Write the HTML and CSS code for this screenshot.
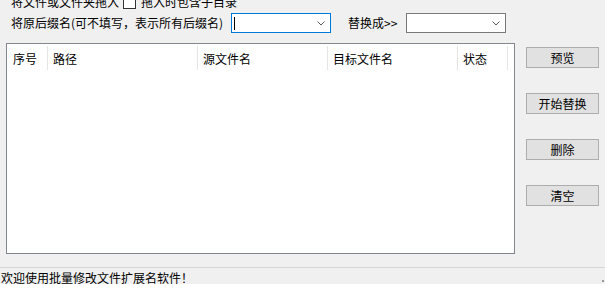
FILE: index.html
```html
<!DOCTYPE html>
<html lang="zh-CN">
<head>
<meta charset="utf-8">
<title>批量修改文件扩展名</title>
<link rel="stylesheet" href="styles.css">
</head>
<body>
<div class="app">
  <div class="row1">
    <span class="lbl">将文件或文件夹拖入</span>
    <span class="check"></span>
    <span class="lbl">拖入时包含子目录</span>
  </div>
  <div class="row2">
    <span class="lbl src-lbl">将原后缀名(可不填写，表示所有后缀名)</span>
    <div class="combo focused">
      <span class="caret"></span>
      <svg class="chev" width="8" height="5" viewBox="0 0 8 5"><path d="M0.5 0.5 L4 4 L7.5 0.5" fill="none" stroke="#5a5a5a" stroke-width="1"/></svg>
    </div>
    <span class="lbl to-lbl">替换成&gt;&gt;</span>
    <div class="combo">
      <span></span>
      <svg class="chev" width="8" height="5" viewBox="0 0 8 5"><path d="M0.5 0.5 L4 4 L7.5 0.5" fill="none" stroke="#5a5a5a" stroke-width="1"/></svg>
    </div>
  </div>
  <div class="main">
    <div class="list">
      <div class="head">
        <div class="hc c1">序号</div>
        <div class="hc c2">路径</div>
        <div class="hc c3">源文件名</div>
        <div class="hc c4">目标文件名</div>
        <div class="hc c5">状态</div>
      </div>
    </div>
    <div class="buttons">
      <button class="btn">预览</button>
      <button class="btn">开始替换</button>
      <button class="btn">删除</button>
      <button class="btn">清空</button>
    </div>
  </div>
  <div class="status">
    <span class="status-text">欢迎使用批量修改文件扩展名软件！</span>
    <span class="grip"></span>
  </div>
</div>
</body>
</html>
```
FILE: styles.css
```css
html, body {
  margin: 0;
  padding: 0;
}
body {
  width: 605px;
  height: 284px;
  overflow: hidden;
  background: #f0f0f0;
  font-family: "Noto Sans CJK SC", "Microsoft YaHei", sans-serif;
  font-size: 12px;
  color: #000;
}
.app {
  display: flex;
  flex-direction: column;
  height: 284px;
}
.row1 {
  display: flex;
  align-items: center;
  height: 16px;
  margin-top: -6px;
  padding-left: 11px;
}
.lbl {
  line-height: 16px;
  white-space: nowrap;
}
.check {
  width: 11px;
  height: 11px;
  border: 1px solid #333;
  background: #fff;
  margin-left: 4px;
  margin-right: 5px;
}
.row2 {
  display: flex;
  align-items: center;
  height: 20px;
  margin-top: 3px;
  padding-left: 11px;
}
.src-lbl {
  width: 220px;
}
.to-lbl {
  margin-left: 17px;
  width: 58px;
}
.combo {
  box-sizing: border-box;
  width: 100px;
  height: 20px;
  border: 1px solid #7a7a7a;
  background: #fff;
  display: flex;
  align-items: center;
  justify-content: space-between;
  padding: 0 5px 0 2px;
}
.combo.focused {
  border-color: #0078d7;
}
.caret {
  width: 1px;
  height: 13px;
  background: #000;
}
.chev {
  display: block;
  margin-top: 1px;
}
.main {
  display: flex;
  margin-top: 10px;
}
.list {
  box-sizing: border-box;
  width: 509px;
  height: 211px;
  margin-left: 6px;
  border: 1px solid #828790;
  background: #fff;
}
.head {
  display: flex;
}
.hc {
  box-sizing: border-box;
  height: 24px;
  margin-top: 2px;
  line-height: 24px;
  padding-top: 1px;
  padding-left: 5px;
  border-right: 1px solid #e5e5e5;
  white-space: nowrap;
}
.c1 { width: 41px; padding-left: 6px; }
.c2 { width: 150px; }
.c3 { width: 130px; }
.c4 { width: 130px; }
.c5 { width: 50px; }
.buttons {
  display: flex;
  flex-direction: column;
  gap: 25px;
  margin-left: 11px;
  padding-top: 4px;
}
.btn {
  box-sizing: border-box;
  width: 73px;
  height: 21px;
  margin: 0;
  padding: 0;
  background: #e1e1e1;
  border: 1px solid #adadad;
  font-family: inherit;
  font-size: 12px;
  color: #000;
  line-height: 19px;
}
.status {
  display: flex;
  justify-content: space-between;
  align-items: flex-start;
  margin-top: 13px;
  border-top: 1px solid #d7d7d7;
  flex: 1;
}
.status-text {
  line-height: 17px;
  padding-left: 1px;
  padding-top: 1px;
  white-space: nowrap;
}
.grip {
  width: 2px;
  height: 2px;
  background: #999;
  margin-top: 12px;
  margin-right: 1px;
}
```
